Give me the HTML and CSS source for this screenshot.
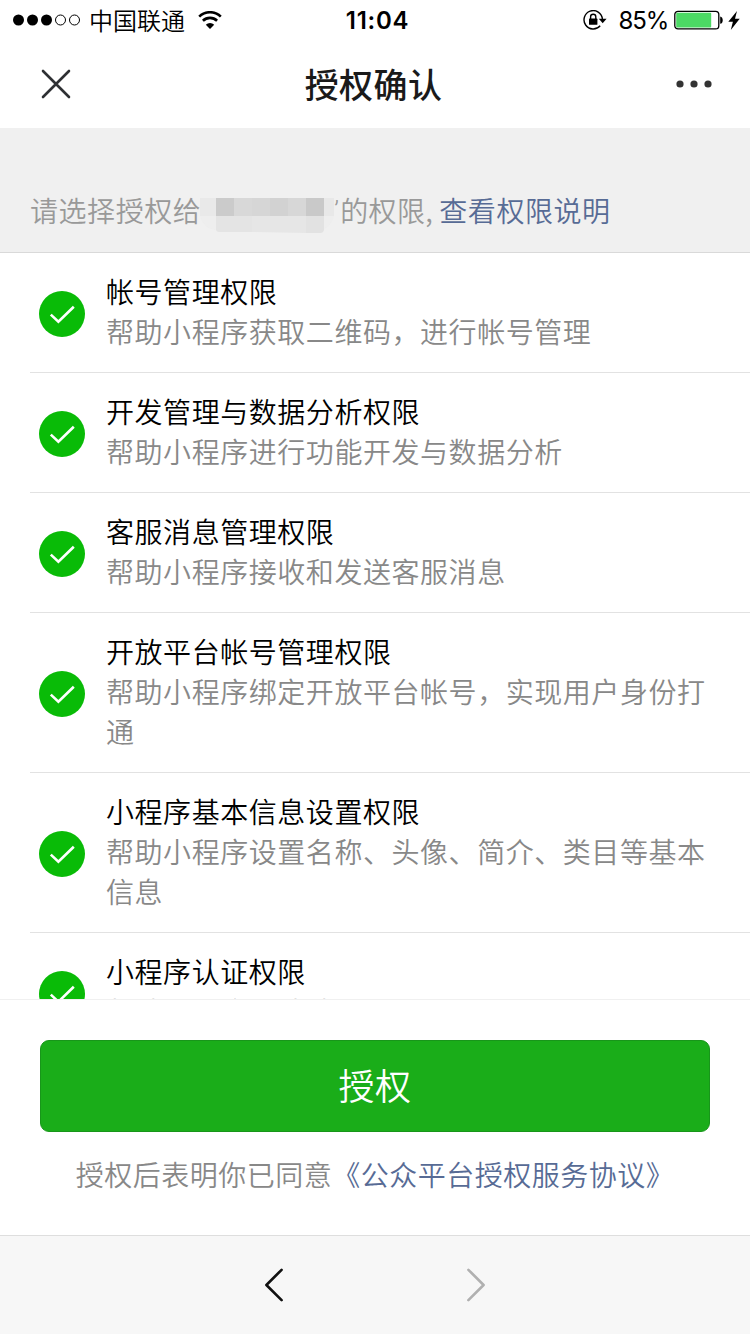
FILE: index.html
```html
<!doctype html>
<html lang="zh-CN">
<head>
    <title>授权确认</title>
    <meta charset="utf-8">
    <link rel="stylesheet" href="styles.css">
</head>
<body>
    <div id="page">
        <div class="status">
            <div class="status-left">
                <svg class="signal" width="68" height="12" viewBox="0 0 68 12">
                    <circle cx="5.5" cy="6" r="5.5"/>
                    <circle cx="19.5" cy="6" r="5.5"/>
                    <circle cx="33.5" cy="6" r="5.5"/>
                    <circle class="empty" cx="47.5" cy="6" r="5"/>
                    <circle class="empty" cx="61.5" cy="6" r="5"/>
                </svg>
                <span class="carrier">中国联通</span>
                <svg class="wifi" width="24" height="18" viewBox="0 0 24 18">
                    <path class="arc" d="M1.2 5.6a15.5 15.5 0 0 1 21.6 0"/>
                    <path class="arc" d="M4.9 9.8a10.2 10.2 0 0 1 14.2 0"/>
                    <path d="M12 18L7.8 13.7a6 6 0 0 1 8.4 0z"/>
                </svg>
            </div>
            <div class="clock">11:04</div>
            <div class="status-right">
                <svg class="lock" width="24" height="20" viewBox="0 0 24 20">
                    <path class="ring" d="M17.2 15.8A9.2 9.2 0 1 1 19.4 9"/>
                    <path d="M15.8 8.8h7.8l-3.9 4.4z"/>
                    <rect x="6" y="8.6" width="8.4" height="6.2" rx=".6"/>
                    <path class="shackle" d="M7.6 9.2V6.8a2.6 2.6 0 0 1 5.2 0v2.4"/>
                </svg>
                <span class="percent">85%</span>
                <svg class="battery" width="50" height="20" viewBox="0 0 50 20">
                    <rect class="case" x=".8" y="1.3" width="44" height="17.6" rx="3.2"/>
                    <rect class="level" x="2.2" y="2.8" width="35" height="14.8" rx="1"/>
                    <path d="M46.2 6.4c3.4.4 3.4 7 0 7.4z"/>
                </svg>
                <svg class="bolt" width="12" height="19" viewBox="0 0 12 19">
                    <path d="M9 0L.3 10.8h4.6L2.8 19 11.7 7.8H7z"/>
                </svg>
            </div>
        </div>
        <div class="nav">
            <svg class="close" width="30" height="30" viewBox="0 0 30 30">
                <path d="M2 2l26 26M28 2L2 28"/>
            </svg>
            <div class="nav-title">授权确认</div>
            <svg class="more" width="36" height="8" viewBox="0 0 36 8">
                <circle cx="4" cy="4" r="3.6"/>
                <circle cx="18" cy="4" r="3.6"/>
                <circle cx="32" cy="4" r="3.6"/>
            </svg>
        </div>

        <div class="hint">
            <span>请选择授权给</span>
            <!-- скрытое имя -->
            <svg class="mosaic" width="134" height="40" viewBox="0 0 134 40">
                <path fill="#ebebeb" d="M0 8h134v18q-2 9-11 14H15Q3 38 0 26z" opacity=".5"/>
                <rect x="0" y="8" width="16" height="18" fill="#e9e9e9"/>
                <rect x="16" y="8" width="18" height="18" fill="#cbcbcb"/>
                <rect x="34" y="8" width="18" height="18" fill="#d8d8d8"/>
                <rect x="52" y="8" width="18" height="18" fill="#d6d6d6"/>
                <rect x="70" y="8" width="18" height="18" fill="#d2d2d2"/>
                <rect x="88" y="8" width="18" height="18" fill="#d7d7d7"/>
                <rect x="106" y="8" width="18" height="18" fill="#c9c9c9"/>
                <rect x="124" y="8" width="10" height="18" fill="#e8e8e8"/>
                <path fill="#e4e4e4" d="M16 26h36v16H19q-3 0-3-3z"/>
                <path fill="#e6e6e6" d="M52 26h54v17l-54-1z"/>
                <path fill="#e2e2e2" d="M106 26h18v13q0 4-4 4h-14z"/>
            </svg>
            <span class="quote">’</span>
            <span class="rest">的权限,</span>
            <a class="link">查看权限说明</a>
        </div>

        <div class="list">
            <div class="item">
                <svg class="check" viewBox="0 0 46 46">
                    <circle cx="23" cy="23" r="23"/>
                    <path d="M11.8 23.6l7.6 7.2L34.8 15.7"/>
                </svg>
                <div class="text">
                    <div class="name">帐号管理权限</div>
                    <div class="desc">帮助小程序获取二维码，进行帐号管理</div>
                </div>
            </div>
            <div class="item">
                <svg class="check" viewBox="0 0 46 46">
                    <circle cx="23" cy="23" r="23"/>
                    <path d="M11.8 23.6l7.6 7.2L34.8 15.7"/>
                </svg>
                <div class="text">
                    <div class="name">开发管理与数据分析权限</div>
                    <div class="desc">帮助小程序进行功能开发与数据分析</div>
                </div>
            </div>
            <div class="item">
                <svg class="check" viewBox="0 0 46 46">
                    <circle cx="23" cy="23" r="23"/>
                    <path d="M11.8 23.6l7.6 7.2L34.8 15.7"/>
                </svg>
                <div class="text">
                    <div class="name">客服消息管理权限</div>
                    <div class="desc">帮助小程序接收和发送客服消息</div>
                </div>
            </div>
            <div class="item">
                <svg class="check" viewBox="0 0 46 46">
                    <circle cx="23" cy="23" r="23"/>
                    <path d="M11.8 23.6l7.6 7.2L34.8 15.7"/>
                </svg>
                <div class="text">
                    <div class="name">开放平台帐号管理权限</div>
                    <div class="desc">帮助小程序绑定开放平台帐号，实现用户身份打通</div>
                </div>
            </div>
            <div class="item">
                <svg class="check" viewBox="0 0 46 46">
                    <circle cx="23" cy="23" r="23"/>
                    <path d="M11.8 23.6l7.6 7.2L34.8 15.7"/>
                </svg>
                <div class="text">
                    <div class="name">小程序基本信息设置权限</div>
                    <div class="desc">帮助小程序设置名称、头像、简介、类目等基本信息</div>
                </div>
            </div>
            <div class="item">
                <svg class="check" viewBox="0 0 46 46">
                    <circle cx="23" cy="23" r="23"/>
                    <path d="M11.8 23.6l7.6 7.2L34.8 15.7"/>
                </svg>
                <div class="text">
                    <div class="name">小程序认证权限</div>
                    <div class="desc">帮助小程序申请认证</div>
                </div>
            </div>
        </div>

        <div class="confirm">
            <div class="btn">授权</div>
            <div class="agree">授权后表明你已同意<a class="link">《公众平台授权服务协议》</a></div>
        </div>

        <div class="toolbar">
            <svg width="20" height="36" viewBox="0 0 20 36">
                <path d="M17.6 2.8L2.4 18l15.2 15.2"/>
            </svg>
            <svg class="no-active" width="20" height="36" viewBox="0 0 20 36">
                <path d="M2.4 2.8L17.6 18 2.4 33.2"/>
            </svg>
        </div>
    </div>
</body>
</html>
```
FILE: styles.css
```css
body {
    margin: 0;
    overflow: hidden;
    font-family: "Noto Sans CJK SC", sans-serif;
    background-color: white;
}

#page {
    display: flex;
    flex-direction: column;
    width: 750px;
    height: 1334px;
}

svg {
    display: block;
    flex: none;
}

/* status bar */
.status {
    display: grid;
    grid-template-columns: 1fr auto 1fr;
    align-items: center;
    height: 40px;
    padding: 0 10px 0 13px;
    color: black;
}

.status-left,
.status-right {
    display: flex;
    align-items: center;
}

.status-right {
    justify-content: flex-end;
}

.signal .empty {
    fill: none;
    stroke: black;
}

.carrier {
    margin-left: 8px;
    font-size: 24px;
    font-weight: 350;
    line-height: 40px;
}

.wifi {
    margin-left: 13px;
}

.wifi .arc {
    fill: none;
    stroke: black;
    stroke-width: 2.6;
}

.clock {
    padding: 2px 0 0 2px;
    font-family: Inter, sans-serif;
    font-size: 24px;
    font-weight: 600;
    line-height: 38px;
    letter-spacing: 0.7px;
}

.lock .ring,
.lock .shackle {
    fill: none;
    stroke: black;
    stroke-width: 1.4;
}

.percent {
    margin: 0 6px 0 12px;
    padding-top: 2px;
    font-family: Inter, sans-serif;
    font-size: 24px;
    line-height: 38px;
    letter-spacing: -1.2px;
}

.battery .case {
    fill: none;
    stroke: black;
    stroke-width: 1.3;
}

.battery .level {
    fill: #4cd964;
}

.bolt {
    margin-left: 4px;
}

/* title bar */
.nav {
    display: flex;
    justify-content: space-between;
    align-items: center;
    height: 88px;
    padding: 0 38px 0 41px;
}

.close path {
    fill: none;
    stroke: #2e3033;
    stroke-width: 2.6;
    stroke-linecap: round;
}

.nav-title {
    padding-bottom: 1px;
    font-size: 34px;
    font-weight: 500;
    letter-spacing: 0.4px;
    color: #1a1a1a;
}

.more {
    fill: #333;
}

.hint {
    display: flex;
    align-items: center;
    box-sizing: border-box;
    height: 125px;
    padding: 39px 30px 0;
    border-bottom: 1px solid #d9d9d9;
    background-color: #f0f0f0;
    color: #999;
    font-size: 28px;
    font-weight: 350;
    letter-spacing: 0.55px;
}

.mosaic {
    margin: 1px 0 0 -1px;
    overflow: visible;
}

.quote {
    width: 6px;
    font-family: Roboto, sans-serif;
    font-size: 26px;
    font-weight: 300;
    letter-spacing: 0;
}

.rest {
    width: 99px;
    letter-spacing: 0.3px;
    white-space: nowrap;
}

.link {
    color: #576b95;
}

/* permissions */
.list {
    flex: 1;
    min-height: 0;
    padding-left: 30px;
    overflow: hidden;
}

.item {
    display: flex;
    align-items: center;
    padding: 18px 30px 21px 9px;
    border-bottom: 1px solid #e2e2e2;
}

.check {
    width: 46px;
    height: 46px;
    margin: 5px 21px 0 0;
}

.check circle {
    fill: #09bb07;
}

.check path {
    fill: none;
    stroke: white;
    stroke-width: 2.6;
}

.text {
    font-size: 28px;
    font-weight: 350;
    line-height: 40px;
    letter-spacing: 0.55px;
}

.name {
    color: black;
}

.desc {
    color: #888;
}

/* bottom */
.confirm {
    box-sizing: border-box;
    height: 236px;
    padding: 40px 40px 0;
    border-top: 1px solid #f0f0f0;
}

.btn {
    box-sizing: border-box;
    height: 92px;
    border: 1px solid #18961a;
    border-radius: 9px;
    background-color: #1aad19;
    color: white;
    font-size: 36px;
    font-weight: 350;
    line-height: 86px;
    letter-spacing: 0.5px;
    text-align: center;
}

.agree {
    margin-top: 22px;
    color: #888;
    font-size: 28px;
    font-weight: 350;
    line-height: 40px;
    letter-spacing: 0.5px;
    text-align: center;
    white-space: nowrap;
}

.toolbar {
    display: flex;
    justify-content: center;
    align-items: center;
    gap: 182px;
    box-sizing: border-box;
    height: 99px;
    border-top: 1px solid #dedede;
    background-color: #f7f7f7;
}

.toolbar path {
    fill: none;
    stroke: #111;
    stroke-width: 2.6;
    stroke-linecap: round;
    stroke-linejoin: round;
}

.toolbar .no-active path {
    stroke: #b0b0b0;
}
```
